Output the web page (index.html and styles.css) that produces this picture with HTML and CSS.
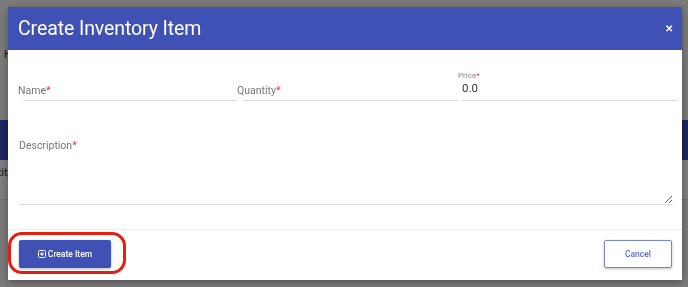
FILE: index.html
```html
<!DOCTYPE html>
<html lang="en">
<head>
    <meta charset="UTF-8">
    <meta name="viewport" content="width=device-width, initial-scale=1.0">
    <title>Create Inventory Item</title>
    <link rel="stylesheet" href="styles.css">
</head>
<body>
    <!-- page behind the dialog -->
    <div class="page">
        <p class="page-text">Here are the items in the inventory</p>
        <div class="table-head">Item</div>
        <div class="table-row">Quantity</div>
    </div>
    <div class="backdrop"></div>

    <div class="modal">
        <div class="modal-header">
            <h2>Create Inventory Item</h2>
            <span class="close">&#x2715;</span>
        </div>

        <div class="modal-body">
            <div class="field-row">
                <div class="field">
                    <label class="placeholder">Name<span class="req">*</span></label>
                    <div class="line"></div>
                </div>
                <div class="field">
                    <label class="placeholder">Quantity<span class="req">*</span></label>
                    <div class="line"></div>
                </div>
                <div class="field filled">
                    <label class="small-label">Price<span class="req">*</span></label>
                    <div class="value">0.0</div>
                    <div class="line"></div>
                </div>
            </div>

            <div class="desc">
                <label class="placeholder">Description<span class="req">*</span></label>
                <textarea></textarea>
            </div>
        </div>

        <div class="modal-footer">
            <button class="btn btn-primary">
                <svg width="8" height="8" viewBox="0 0 8 8"><rect x="0.5" y="0.5" width="7" height="7" rx="1" fill="none" stroke="white" stroke-width="1"/><path d="M4 2v4M2 4h4" stroke="white" stroke-width="1"/></svg>
                Create Item
            </button>
            <button class="btn btn-outline">Cancel</button>
        </div>

        <div class="highlight"></div>
    </div>
</body>
</html>
```

FILE: styles.css
```css
* { margin: 0; padding: 0; box-sizing: border-box; font-family: Roboto, "Liberation Sans", sans-serif; }
body { background: #f6f6f6; width: 688px; height: 287px; overflow: hidden; }

.page { padding-top: 48px; }
.page-text { font-size: 11px; color: #222; padding-left: 4px; margin-bottom: 58px; height: 14px; }
.table-head { height: 40px; background: #3a4dbf; color: white; font-size: 11px; padding: 12px 30px; }
.table-row { height: 40px; background: #fff; border-bottom: 1px solid #ddd; font-size: 11px; padding: 6px 0 0 0; color: #222; text-indent: -28px; }
.backdrop { position: fixed; inset: 0; background: rgba(0, 0, 0, 0.5); }

.modal {
    position: fixed;
    left: 8px;
    top: 7px;
    width: 674px;
    height: 273px;
    background: white;
    display: flex;
    flex-direction: column;
    box-shadow: 0 2px 8px rgba(0, 0, 0, 0.35);
}
.modal-header {
    height: 43px;
    background: #3f51b5;
    color: white;
    display: flex;
    align-items: center;
    justify-content: space-between;
    padding: 0 9px 0 10px;
}
.modal-header h2 { font-size: 19.5px; font-weight: 400; letter-spacing: -0.1px; }
.close { font-size: 10px; font-weight: bold; }

.modal-body { flex: 1; padding: 21px 4px 0 10px; }
.field-row { display: grid; grid-template-columns: 219px 221px 220px; }
.field { position: relative; height: 30px; display: flex; flex-direction: column; justify-content: flex-end; }
.placeholder { font-size: 10.5px; color: #777; }
.field .placeholder { position: absolute; left: 0; top: 13px; }
.req { color: #e53935; }
.line { height: 1px; background: #ddd; margin-left: 5px; }
.field:nth-child(2) .line { margin-left: 6px; }
.field.filled .line { margin-left: 4px; }
.small-label { font-size: 8px; color: #888; position: absolute; left: 0; top: 0; }
.field.filled .value { font-size: 11.5px; color: #333; padding-left: 4px; margin-bottom: 5px; }

.desc { margin-top: 38px; margin-right: 5px; display: flex; flex-direction: column; }
.desc .placeholder { padding-left: 1px; }
.desc textarea {
    height: 51px;
    border: none;
    border-bottom: 1px solid #ddd;
    outline: none;
    resize: vertical;
    margin-top: 2px;
    margin-left: 1px;
}

.modal-footer {
    border-top: 1px solid #eee;
    padding: 10px 10px 12px 11px;
    display: flex;
    justify-content: space-between;
}
.btn {
    height: 28px;
    font-size: 8.5px;
    font-weight: 500;
    border-radius: 2px;
    cursor: pointer;
    display: flex;
    align-items: center;
    justify-content: center;
    gap: 2px;
}
.btn-primary { width: 92px; background: #3f51b5; color: white; border: none; box-shadow: 0 1px 3px rgba(0, 0, 0, 0.3); }
.btn-outline { width: 68px; background: white; color: #5c6bc0; border: 1px solid #7986cb; box-shadow: 0 1px 3px rgba(0, 0, 0, 0.25); }

.highlight {
    position: absolute;
    left: 0;
    top: 225px;
    width: 118px;
    height: 42px;
    border: 3px solid #e3200f;
    border-radius: 14px;
}
```
